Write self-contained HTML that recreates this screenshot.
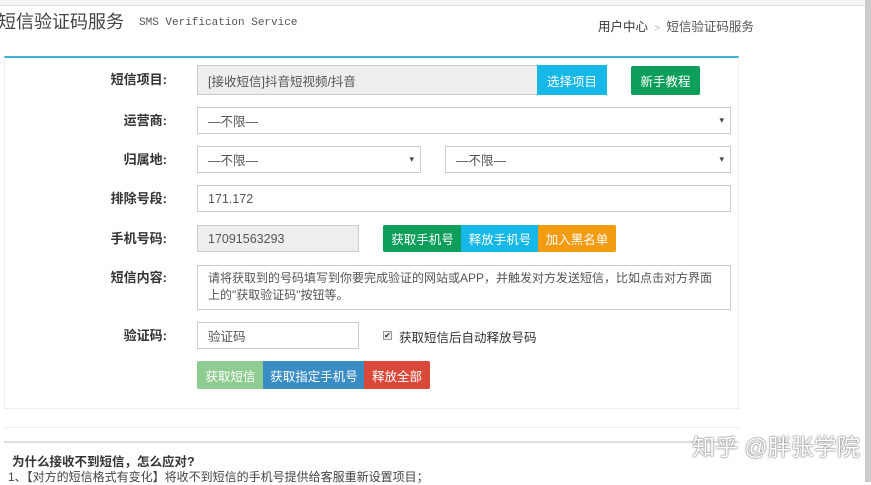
<!DOCTYPE html>
<html><head><meta charset="utf-8"><style>
*{margin:0;padding:0;box-sizing:border-box}
body{width:871px;height:482px;overflow:hidden;background:#fff;font-family:"Liberation Sans","Noto Sans CJK SC",sans-serif;font-size:13px;color:#333;position:relative}
.a{position:absolute;white-space:nowrap}
.lbl{position:absolute;right:704px;font-weight:bold;font-size:13px;color:#333;text-align:right;line-height:16px}
.in{position:absolute;border:1px solid #ccc;background:#fff;padding-left:10px;display:flex;align-items:center;font-size:12.5px;color:#555}
.g{background:#eee}
.btn{position:absolute;color:#fff;display:flex;align-items:center;justify-content:center;font-size:12.5px;white-space:nowrap}
.sel::after{content:"▾";position:absolute;right:6px;font-size:9px;color:#444}
</style></head><body>
<div class="a" style="left:0;top:0;width:871px;height:6px;background:#f5f5f5;border-bottom:1px solid #ddd"></div>
<div class="a" style="left:865px;top:0;width:6px;height:482px;background:#ccc"></div>
<div class="a" style="left:-2px;top:11px;font-size:18px;color:#444;line-height:22px">短信验证码服务</div>
<div class="a" style="left:139px;top:17px;font-family:'Liberation Mono',monospace;font-size:11px;color:#555">SMS Verification Service</div>
<div class="a" style="left:598px;top:16px;font-size:12.5px;color:#333">用户中心 <span style="color:#bbb;font-size:10px">&nbsp;&gt;&nbsp;</span> <span style="color:#555">短信验证码服务</span></div>
<div class="a" style="left:4px;top:56px;width:735px;height:353px;border:1px solid #eee;border-top:2px solid #3cb4d4"></div>
<div class="a" style="left:4px;top:427px;width:735px;height:1px;background:#eee"></div>
<div class="a" style="left:4px;top:441px;width:735px;height:2px;background:#ddd"></div>

<div class="lbl" style="top:72px">短信项目:</div>
<div class="in g" style="left:197px;top:65px;width:341px;height:30px">[接收短信]抖音短视频/抖音</div>
<div class="btn" style="left:537px;top:65px;width:70px;height:30px;background:#16b8e8">选择项目</div>
<div class="btn" style="left:631px;top:66px;width:69px;height:29px;background:#0d9e5b;border-radius:2px">新手教程</div>

<div class="lbl" style="top:113px">运营商:</div>
<div class="in sel" style="left:197px;top:107px;width:534px;height:27px">—不限—</div>

<div class="lbl" style="top:152px">归属地:</div>
<div class="in sel" style="left:197px;top:146px;width:224px;height:27px">—不限—</div>
<div class="in sel" style="left:445px;top:146px;width:286px;height:27px">—不限—</div>

<div class="lbl" style="top:191px">排除号段:</div>
<div class="in" style="left:197px;top:185px;width:534px;height:27px">171.172</div>

<div class="lbl" style="top:231px">手机号码:</div>
<div class="in g" style="left:197px;top:225px;width:162px;height:27px">17091563293</div>
<div class="btn" style="left:383px;top:225px;width:79px;height:27px;background:#0d9e5b;border-radius:2px 0 0 2px">获取手机号</div>
<div class="btn" style="left:461px;top:225px;width:78px;height:27px;background:#16b8e8">释放手机号</div>
<div class="btn" style="left:538px;top:225px;width:78px;height:27px;background:#f39c12;border-radius:0 2px 2px 0">加入黑名单</div>

<div class="lbl" style="top:270px">短信内容:</div>
<div class="in" style="left:197px;top:265px;width:534px;height:45px;align-items:flex-start;padding-top:4px;padding-right:18px;line-height:17px;font-size:12px">请将获取到的号码填写到你要完成验证的网站或APP，并触发对方发送短信，比如点击对方界面上的"获取验证码"按钮等。</div>

<div class="lbl" style="top:328px">验证码:</div>
<div class="in" style="left:197px;top:322px;width:162px;height:27px">验证码</div>
<div class="a" style="left:383px;top:331px;width:9px;height:9px;border:1px solid #999;background:#eee;font-size:8px;line-height:8px;text-align:center">✔</div>
<div class="a" style="left:399px;top:327px;font-size:12.5px">获取短信后自动释放号码</div>

<div class="btn" style="left:197px;top:361px;width:67px;height:28px;background:#8fcc91;border-radius:2px 0 0 2px">获取短信</div>
<div class="btn" style="left:263px;top:361px;width:102px;height:28px;background:#3a8cc4">获取指定手机号</div>
<div class="btn" style="left:364px;top:361px;width:66px;height:28px;background:#d9493a;border-radius:0 2px 2px 0">释放全部</div>

<div class="a" style="left:12px;top:451px;font-weight:bold;font-size:12.5px">为什么接收不到短信，怎么应对?</div>
<div class="a" style="left:8px;top:468px;font-size:12px;color:#444">1、【对方的短信格式有变化】将收不到短信的手机号提供给客服重新设置项目；</div>
<div class="a" style="left:692px;top:432px;font-size:23px;line-height:30px;color:#fff;text-shadow:0 0 2px #777,0 0 1px #555">知乎 @胖张学院</div>
</body></html>
